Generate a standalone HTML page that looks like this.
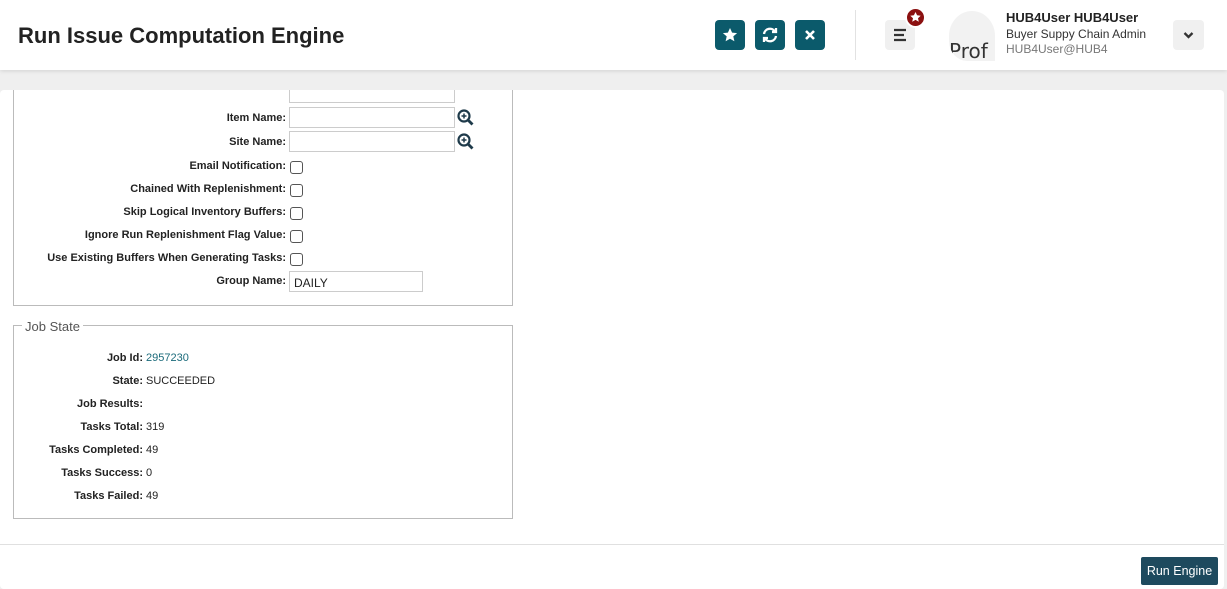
<!DOCTYPE html>
<html><head><style>
*{box-sizing:border-box;margin:0;padding:0}
body{width:1227px;height:589px;background:#efefef;font-family:"Liberation Sans",sans-serif;position:relative;overflow:hidden}
.a{position:absolute}
.hdr{left:0;top:0;width:1227px;height:70px;background:#fff;box-shadow:0 1px 4px rgba(0,0,0,.12)}
.btn{width:30px;height:30px;background:#0b5a6b;border-radius:4px;top:20px}
.card{left:0;top:90px;width:1224px;height:499px;background:#fff;border-radius:4px;overflow:hidden}
.lbl{font-size:11px;font-weight:bold;color:#222;text-align:right;width:286px;left:0}
.inp{border:1px solid #ccc;height:21px;background:#fff}
.cb{width:13px;height:13px;border:1px solid #555;border-radius:3px;left:290px}
.fs{border:1px solid #bbb}
.jl{font-size:11px;font-weight:bold;color:#222;text-align:right;width:143px;left:0}
.jv{font-size:11px;color:#222;left:146px}
</style></head><body>
<div class="a hdr">
<div class="a" style="left:18px;top:23px;font-size:22px;font-weight:bold;color:#222">Run Issue Computation Engine</div>
<div class="a btn" style="left:715px"><svg width="30" height="30"><path d="M15 8l2.1 4.6 5 .5-3.8 3.3 1.1 4.9-4.4-2.6-4.4 2.6 1.1-4.9-3.8-3.3 5-.5z" fill="#fff"/></svg></div>
<div class="a btn" style="left:755px"><svg width="30" height="30" fill="none" stroke="#fff" stroke-width="2.3"><path d="M9 14a6 6 0 0 1 11-2.5M21 16a6 6 0 0 1-11 2.5"/><path d="M21 8v4h-4M9 22v-4h4" /></svg></div>
<div class="a btn" style="left:795px"><svg width="30" height="30" stroke="#fff" stroke-width="2.6"><path d="M11 11l8 8M19 11l-8 8"/></svg></div>
<div class="a" style="left:855px;top:10px;width:1px;height:50px;background:#e2e2e2"></div>
<div class="a" style="left:885px;top:20px;width:30px;height:30px;background:#f0f0f0;border-radius:4px"><svg width="30" height="30" stroke="#333" stroke-width="2.3"><path d="M9 10h12M9 15h10M9 20h12"/></svg></div>
<div class="a" style="left:905px;top:7px;width:21px;height:21px;border-radius:50%;background:#8b1010;border:2px solid #fff"><svg width="17" height="17"><path d="M8.5 3l1.6 3.3 3.6.4-2.7 2.5.8 3.6-3.3-1.9-3.3 1.9.8-3.6-2.7-2.5 3.6-.4z" fill="#fff"/></svg></div>
<div class="a" style="left:949px;top:11px;width:46px;height:50px;border-radius:50% 50% 0 40%;background:#f2f2f2;overflow:hidden"><span class="a" style="left:0;top:28px;font-size:20px;color:#333;font-family:'DejaVu Sans',sans-serif">Prof</span></div>
<div class="a" style="left:1006px;top:10px;font-size:13px;font-weight:bold;color:#222">HUB4User HUB4User</div>
<div class="a" style="left:1006px;top:27px;font-size:12px;color:#333">Buyer Suppy Chain Admin</div>
<div class="a" style="left:1006px;top:42px;font-size:12px;color:#777">HUB4User@HUB4</div>
<div class="a" style="left:1173px;top:20px;width:31px;height:30px;background:#f0f0f0;border-radius:4px"><svg width="31" height="30" fill="none" stroke="#333" stroke-width="2.3"><path d="M11.5 13l4 4 4-4"/></svg></div>
</div>
<div class="a card">
<div class="a fs" style="left:13px;top:-2px;width:500px;height:218px;border-top:none"></div>
<div class="a inp" style="left:289px;top:-8px;width:166px;height:21px"></div>
<div class="a lbl" style="top:22px">Item Name:</div>
<div class="a inp" style="left:289px;top:17px;width:166px"></div>
<svg class="a" style="left:457px;top:19px" width="17" height="17"><circle cx="7" cy="7" r="5.5" fill="none" stroke="#1e3a4a" stroke-width="2.2"/><path d="M11 11l4.5 4.5" stroke="#1e3a4a" stroke-width="2.8"/><path d="M4.5 7h5M7 4.5v5" stroke="#1e3a4a" stroke-width="1.5"/></svg>
<div class="a lbl" style="top:46px">Site Name:</div>
<div class="a inp" style="left:289px;top:41px;width:166px"></div>
<svg class="a" style="left:457px;top:43px" width="17" height="17"><circle cx="7" cy="7" r="5.5" fill="none" stroke="#1e3a4a" stroke-width="2.2"/><path d="M11 11l4.5 4.5" stroke="#1e3a4a" stroke-width="2.8"/><path d="M4.5 7h5M7 4.5v5" stroke="#1e3a4a" stroke-width="1.5"/></svg>
<div class="a lbl" style="top:70px">Email Notification:</div><div class="a cb" style="top:71px"></div>
<div class="a lbl" style="top:93px">Chained With Replenishment:</div><div class="a cb" style="top:94px"></div>
<div class="a lbl" style="top:116px">Skip Logical Inventory Buffers:</div><div class="a cb" style="top:117px"></div>
<div class="a lbl" style="top:139px">Ignore Run Replenishment Flag Value:</div><div class="a cb" style="top:140px"></div>
<div class="a lbl" style="top:162px">Use Existing Buffers When Generating Tasks:</div><div class="a cb" style="top:163px"></div>
<div class="a lbl" style="top:185px">Group Name:</div>
<div class="a inp" style="left:289px;top:181px;width:134px;font-size:12px;padding:4px 4px;color:#222">DAILY</div>
<div class="a fs" style="left:13px;top:235px;width:500px;height:194px"></div>
<div class="a" style="left:22px;top:229px;background:#fff;padding:0 3px;font-size:13px;color:#555">Job State</div>
<div class="a jl" style="top:262px">Job Id:</div><div class="a jv" style="top:262px;color:#1a6a7a">2957230</div>
<div class="a jl" style="top:285px">State:</div><div class="a jv" style="top:285px">SUCCEEDED</div>
<div class="a jl" style="top:308px">Job Results:</div>
<div class="a jl" style="top:331px">Tasks Total:</div><div class="a jv" style="top:331px">319</div>
<div class="a jl" style="top:354px">Tasks Completed:</div><div class="a jv" style="top:354px">49</div>
<div class="a jl" style="top:377px">Tasks Success:</div><div class="a jv" style="top:377px">0</div>
<div class="a jl" style="top:400px">Tasks Failed:</div><div class="a jv" style="top:400px">49</div>
<div class="a" style="left:0;top:454px;width:1224px;height:1px;background:#e0e0e0"></div>
<div class="a" style="left:1141px;top:467px;width:77px;height:28px;background:#1e4a5e;border-radius:2px;color:#fff;font-size:12.5px;text-align:center;line-height:28px">Run Engine</div>
</div>
</body></html>
